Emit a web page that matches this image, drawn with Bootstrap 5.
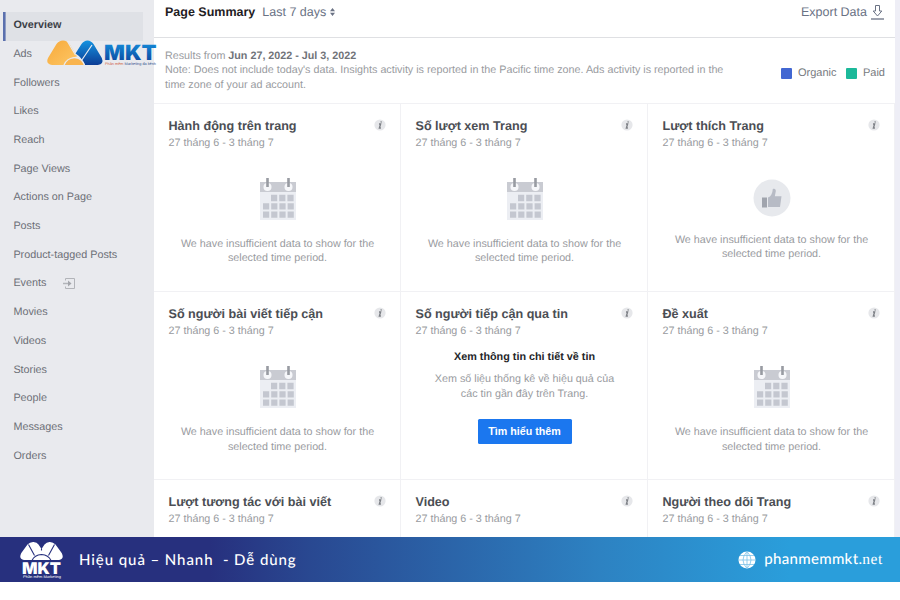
<!DOCTYPE html>
<html lang="vi">
<head>
<meta charset="utf-8">
<meta name="viewport" content="width=device-width, initial-scale=1">
<title>Page Insights</title>
<link href="https://cdn.jsdelivr.net/npm/bootstrap@5.3.0/dist/css/bootstrap.min.css" rel="stylesheet">
<style>
body{font-family:"Liberation Sans",Arial,sans-serif;font-size:10.76px;line-height:14.4px;color:#999ba0;background:#fff;width:900px;height:600px;overflow:hidden;text-rendering:geometricPrecision}
.insights{height:537px;overflow:hidden}
.side{width:154px;background:#e9eaee;padding:12px 11px 0 4px}
.side .nav-link{height:28.68px;padding:0 0 1.4px 9.4px;color:#6c6f76;font-size:10.8px}
.side .nav-link.active{color:#3c3f46;font-weight:700;background:#dfe1e6;box-shadow:-1px 0 0 #5b70ae,inset 1.6px 0 0 #5b70ae;padding-bottom:2px}
.brand{left:46px;top:39px}
.edge{width:5px;background:#eeeef6}
.topbar{height:38px;border-bottom:1px solid #dfe0e3;padding:0 11px 13px;font-size:12.5px;color:#6a7284}
.topbar strong{color:#1f2023}
.range{margin-left:7px}
.note{height:65px;padding:11px 10px 0 11px}
.note strong{color:#707379}
.note-text{width:575px}
.legend{font-size:11px;color:#787b81;padding-top:13px}
.swatch{width:11px;height:11px;border-radius:1px;margin-right:5.5px}
.organic{background:#4267d2}.paid{background:#1cb99a;margin-left:10px}
.tiles{--bs-gutter-x:0;--bs-gutter-y:0;width:741px}
.tile{height:188.2px;border-top:1px solid #f1f1f4;border-right:1px solid #f1f1f4;padding:13px 15px 0 14.5px}
.tile h2{font-size:12.6px;line-height:18px;font-weight:700;color:#4b4e54;margin:0}
.tile-date{line-height:16px}
.tile-body{padding-left:1.5px}
.info{width:12px;height:12px;margin-top:2px;margin-right:-1px}
.cal{width:38px;height:44px;margin-top:27px}
.like{width:38px;height:38px;margin-top:27.5px}
.empty{margin-top:15px}
.like + .empty{margin-top:16.5px}
.story-title{color:#242528;font-size:10.8px;margin-top:10.6px}
.story-btn{--bs-btn-bg:#1b77ef;--bs-btn-color:#fff;--bs-btn-border-width:0;--bs-btn-border-radius:1.5px;--bs-btn-font-size:10.7px;--bs-btn-font-weight:700;--bs-btn-padding-y:0;--bs-btn-padding-x:0;width:94px;height:25px;margin-top:18px}
.footer-bar{height:45px;background:linear-gradient(90deg,#27307e 0,#27307e 210px,#294891 310px,#2d82c2 600px,#2a9edb 790px,#2a9edb 100%);color:#fff;font-family:Lato,sans-serif;padding:0 17px 0 19px}
.slogan{font-size:15px;font-weight:500;letter-spacing:.92px;white-space:pre;margin-left:15px;line-height:20px}
.site{font-size:15px;font-weight:500;line-height:20px}
.site-name{letter-spacing:.32px}
.site-tld{font-family:"Liberation Serif",serif;font-size:15.5px;font-weight:400;letter-spacing:.6px}
</style>
<script src="https://cdn.jsdelivr.net/npm/bootstrap@5.3.0/dist/js/bootstrap.bundle.min.js"></script>
</head>
<body>
<svg class="d-none">
<symbol id="i-info" viewBox="0 0 12 12"><circle cx="6" cy="6" r="5.600" fill="#e6e7ea"/><path d="M5 5h1.600L5.400 9h1.500M7.300 2.300 7 3.500" fill="none" stroke="#7d8086" stroke-width="1.400"/></symbol>
<symbol id="i-cal" viewBox="0 0 38 44"><path fill="#eceef3" d="M1 4h36v38H1z"/><path fill="#c9cbd2" d="M1 4h36v10H1z"/><circle cx="8.500" cy="9" r="4" fill="#f6f7fa"/><circle cx="29.500" cy="9" r="4" fill="#f6f7fa"/><path d="M8.500 0v9M29.500 0v9" stroke="#989ba2" stroke-width="2.600"/><path d="M12 20h24M4 28.300h32M4 36.700h32" stroke="#c4c7d0" stroke-width="6.300" stroke-dasharray="6.200 2"/></symbol>
<symbol id="i-like" viewBox="0 0 38 38"><circle cx="19" cy="19" r="18.500" fill="#e7e9ed"/><path fill="#a0a4ad" d="M9 18.500h5v10H9z"/><path fill="#b7bbc5" d="M15 18.500c3-1 4.500-4 4.800-8.500 2-.8 3.200.2 3 2.300l-1 5h6.700l-1.500 10.700H15z"/></symbol>
</svg>

<div class="insights d-flex position-relative">
  <nav class="side nav flex-column flex-nowrap flex-shrink-0">
    <a class="nav-link active d-flex align-items-center" href="#">Overview</a>
    <a class="nav-link d-flex align-items-center" href="#">Ads</a>
    <a class="nav-link d-flex align-items-center" href="#">Followers</a>
    <a class="nav-link d-flex align-items-center" href="#">Likes</a>
    <a class="nav-link d-flex align-items-center" href="#">Reach</a>
    <a class="nav-link d-flex align-items-center" href="#">Page Views</a>
    <a class="nav-link d-flex align-items-center" href="#">Actions on Page</a>
    <a class="nav-link d-flex align-items-center" href="#">Posts</a>
    <a class="nav-link d-flex align-items-center" href="#">Product-tagged Posts</a>
    <a class="nav-link d-flex align-items-center" href="#">Events
      <svg class="ms-3" width="14" height="13" viewBox="0 0 14 13" fill="none" stroke="#b2b4b9"><path d="M3.500 3.500v-2h9v10h-9v-2"/><path d="M1 6.500h5" stroke-width="1.500"/><path d="M6 3.500 9.500 6.500 6 9.500z" fill="#a3a5ab" stroke="none"/></svg></a>
    <a class="nav-link d-flex align-items-center" href="#">Movies</a>
    <a class="nav-link d-flex align-items-center" href="#">Videos</a>
    <a class="nav-link d-flex align-items-center" href="#">Stories</a>
    <a class="nav-link d-flex align-items-center" href="#">People</a>
    <a class="nav-link d-flex align-items-center" href="#">Messages</a>
    <a class="nav-link d-flex align-items-center" href="#">Orders</a>
  </nav>

  <main class="flex-grow-1">
    <header class="topbar d-flex align-items-center">
      <strong>Page Summary</strong>
      <span class="range">Last 7 days</span>
      <svg class="ms-1" width="5" height="8" viewBox="0 0 5 8" fill="#6a7284"><path d="M2.500 0 5 3.300H0zM2.500 8 5 4.700H0z"/></svg>
      <span class="ms-auto">Export Data</span>
      <svg class="ms-1" width="13" height="15" viewBox="0 0 13 15" fill="none" stroke="#6a7284"><path d="M4.500.5h4v5.500h2.300L6.500 11 2.200 6h2.300z"/><path d="M0 14h13" stroke-width="1.300"/></svg>
    </header>

    <section class="note d-flex justify-content-between">
      <div class="note-text">Results from <strong>Jun 27, 2022 - Jul 3, 2022</strong><br>Note: Does not include today's data. Insights activity is reported in the Pacific time zone. Ads activity is reported in the<br>time zone of your ad account.</div>
      <div class="legend d-flex align-items-center align-self-start mt-1">
        <span class="swatch organic"></span><span>Organic</span>
        <span class="swatch paid"></span><span>Paid</span>
      </div>
    </section>

    <section class="tiles row row-cols-3">
      <article class="tile col">
        <div class="d-flex justify-content-between"><h2>Hành động trên trang</h2><svg class="info"><use href="#i-info"/></svg></div>
        <div class="tile-date">27 tháng 6 - 3 tháng 7</div>
        <div class="tile-body text-center"><svg class="cal"><use href="#i-cal"/></svg><div class="empty">We have insufficient data to show for the<br>selected time period.</div></div>
      </article>
      <article class="tile col">
        <div class="d-flex justify-content-between"><h2>Số lượt xem Trang</h2><svg class="info"><use href="#i-info"/></svg></div>
        <div class="tile-date">27 tháng 6 - 3 tháng 7</div>
        <div class="tile-body text-center"><svg class="cal"><use href="#i-cal"/></svg><div class="empty">We have insufficient data to show for the<br>selected time period.</div></div>
      </article>
      <article class="tile col">
        <div class="d-flex justify-content-between"><h2>Lượt thích Trang</h2><svg class="info"><use href="#i-info"/></svg></div>
        <div class="tile-date">27 tháng 6 - 3 tháng 7</div>
        <div class="tile-body text-center"><svg class="like"><use href="#i-like"/></svg><div class="empty">We have insufficient data to show for the<br>selected time period.</div></div>
      </article>
      <article class="tile col">
        <div class="d-flex justify-content-between"><h2>Số người bài viết tiếp cận</h2><svg class="info"><use href="#i-info"/></svg></div>
        <div class="tile-date">27 tháng 6 - 3 tháng 7</div>
        <div class="tile-body text-center"><svg class="cal"><use href="#i-cal"/></svg><div class="empty">We have insufficient data to show for the<br>selected time period.</div></div>
      </article>
      <article class="tile col">
        <div class="d-flex justify-content-between"><h2>Số người tiếp cận qua tin</h2><svg class="info"><use href="#i-info"/></svg></div>
        <div class="tile-date">27 tháng 6 - 3 tháng 7</div>
        <div class="tile-body text-center">
          <div class="story-title fw-bold">Xem thông tin chi tiết về tin</div>
          <div class="mt-2">Xem số liệu thống kê về hiệu quả của<br>các tin gần đây trên Trang.</div>
          <button class="btn story-btn" type="button">Tìm hiểu thêm</button>
        </div>
      </article>
      <article class="tile col">
        <div class="d-flex justify-content-between"><h2>Đề xuất</h2><svg class="info"><use href="#i-info"/></svg></div>
        <div class="tile-date">27 tháng 6 - 3 tháng 7</div>
        <div class="tile-body text-center"><svg class="cal"><use href="#i-cal"/></svg><div class="empty">We have insufficient data to show for the<br>selected time period.</div></div>
      </article>
      <article class="tile col">
        <div class="d-flex justify-content-between"><h2>Lượt tương tác với bài viết</h2><svg class="info"><use href="#i-info"/></svg></div>
        <div class="tile-date">27 tháng 6 - 3 tháng 7</div>
      </article>
      <article class="tile col">
        <div class="d-flex justify-content-between"><h2>Video</h2><svg class="info"><use href="#i-info"/></svg></div>
        <div class="tile-date">27 tháng 6 - 3 tháng 7</div>
      </article>
      <article class="tile col">
        <div class="d-flex justify-content-between"><h2>Người theo dõi Trang</h2><svg class="info"><use href="#i-info"/></svg></div>
        <div class="tile-date">27 tháng 6 - 3 tháng 7</div>
      </article>
    </section>
  </main>
  <div class="edge flex-shrink-0"></div>

  <svg class="brand position-absolute" width="112" height="28" viewBox="0 0 112 28">
    <defs>
      <linearGradient id="gold" x1="0" y1="0" x2="1" y2="1"><stop offset="0" stop-color="#f7a93b"/><stop offset="1" stop-color="#fdc765"/></linearGradient>
      <linearGradient id="blue" x1="0" y1="0" x2="0" y2="1"><stop offset="0" stop-color="#1593e0"/><stop offset="1" stop-color="#0c3d95"/></linearGradient>
    </defs>
    <path fill="url(#gold)" d="M2.300 18.500 10.500 5Q13 1.500 17 1.500T23.500 5L31 17.500q-8 .5-11.500 8.500H6q-7-1.500-3.700-7.500z"/>
    <path fill="url(#blue)" d="M29.500 14.500 35.500 5Q38 1.500 41.500 1.500T47.500 5l8.300 14q2.500 6-4 7H39q-3-7.500-9.500-11.500z"/>
    <path fill="#f9b44e" d="M18.500 26q3-6.500 10-7 7 .5 9.500 7z"/>
    <path fill="none" stroke="#e9eaee" stroke-width="1.200" d="m21.500 2.500 8 13.500M46 6 35.500 21.500M18 26q3-7 10.500-7.500Q36 19 38.500 26"/>
    <text x="58" y="20.500" font-family="Inter,sans-serif" font-weight="900" font-size="21" fill="url(#blue)" textLength="52.500" lengthAdjust="spacingAndGlyphs">MKT</text>
    <text x="59" y="26" font-family="Liberation Sans,sans-serif" font-size="3.700" textLength="51" lengthAdjust="spacingAndGlyphs" fill="#34548f"><tspan fill="#d06045">Phần mềm</tspan> Marketing đa kênh</text>
  </svg>
</div>

<footer class="footer-bar d-flex align-items-center">
  <svg width="45" height="38" viewBox="0 0 45 38" fill="#fff">
    <path d="M2.300 12 8.500 3.500Q11 .8 14.500 1q3.500 0 5 2.500l3 4.500 3-4.500Q27.500 1 30.500 1q3.500-.2 6 2.500l6.200 8.500q3 6-2.700 7H5q-5.700-1-2.700-7z"/>
    <path fill="none" stroke="#27307e" stroke-width="1.100" d="m9.500 3.500 6 11M35.500 3.500l-6 11M22.500 7.500v2M13 19.500q2.500-5.500 9.500-6 7 .5 9.500 6"/>
    <text x="3" y="32.500" font-family="Inter,sans-serif" font-weight="900" font-size="16" textLength="39" lengthAdjust="spacingAndGlyphs">MKT</text>
    <text x="4" y="36.800" font-family="Liberation Sans,sans-serif" font-size="3.800" textLength="38" lengthAdjust="spacingAndGlyphs">Phần mềm Marketing</text>
  </svg>
  <span class="slogan">Hiệu quả – Nhanh  - Dễ dùng</span>
  <svg class="ms-auto" width="18" height="18" viewBox="0 0 18 18"><circle cx="9" cy="9" r="8.500" fill="#fff"/><path d="M9 0v18M0 9h18M2 4.500h14M2 13.500h14M9 .5Q1 9 9 17.500Q17 9 9 .5" fill="none" stroke="#7cc2e8" stroke-width=".8"/></svg>
  <span class="site ms-2"><span class="site-name">phanmemmkt.</span><span class="site-tld">net</span></span>
</footer>
</body>
</html>
